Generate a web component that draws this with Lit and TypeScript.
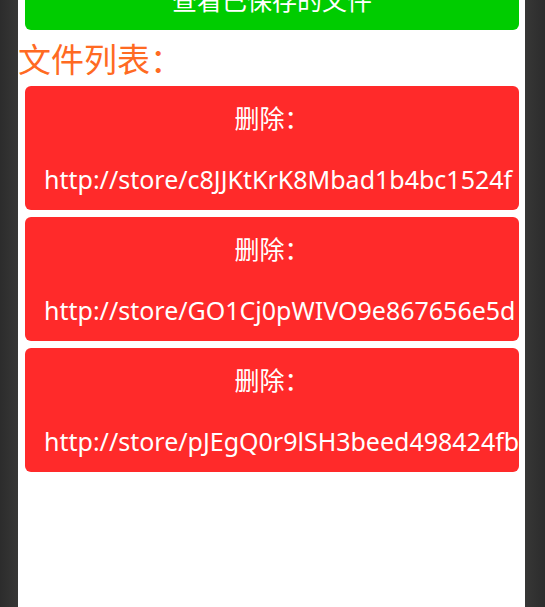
import { LitElement, html, css } from "lit";
import { customElement, state } from "lit/decorators.js";

@customElement("app-root")
export class AppRoot extends LitElement {
  static styles = css`
    :host {
      display: flex;
      height: 100vh;
      overflow: hidden;
      font-family: "Noto Sans", "Noto Sans CJK SC", sans-serif;
    }
    * {
      box-sizing: border-box;
    }
    .edge {
      flex: 0 0 18px;
      background: linear-gradient(to right, #2c2c2c, #373736);
    }
    .edge-right {
      flex-basis: 20px;
      background: linear-gradient(to left, #2c2c2c, #373736);
    }
    .phone {
      flex: 1;
      min-width: 0;
      background: #ffffff;
      overflow: hidden;
    }
    .btn {
      display: flex;
      flex-direction: column;
      align-items: center;
      width: calc(100% - 13px);
      margin: 0 6px 7px 7px;
      padding: 0 19px;
      border: 0;
      border-radius: 6px;
      color: #ffffff;
      font: inherit;
      font-size: 25px;
      line-height: 60px;
      overflow: hidden;
      white-space: nowrap;
    }
    .view {
      height: 30px;
      justify-content: flex-end;
      border-radius: 0 0 6px 6px;
      background: #00cc00;
    }
    .remove {
      padding-bottom: 2px;
      background: #ff2a2a;
    }
    .label {
      line-height: 64px;
    }
    .url {
      align-self: flex-start;
      line-height: 58px;
    }
    .title {
      margin: 0;
      padding-bottom: 4px;
      color: #ff6a22;
      font-size: 33px;
      font-weight: 400;
      line-height: 45px;
    }
  `;

  @state() private files = [
    "http://store/c8JJKtKrK8Mbad1b4bc1524f",
    "http://store/GO1Cj0pWIVO9e867656e5d",
    "http://store/pJEgQ0r9lSH3beed498424fb",
  ];

  private remove(file: string) {
    this.files = this.files.filter((f) => f !== file);
  }

  render() {
    return html`
      <div class="edge"></div>
      <main class="phone">
        <button class="btn view"><span>查看已保存的文件</span></button>
        <h1 class="title">文件列表：</h1>
        ${this.files.map(
          (file) => html`
            <button class="btn remove" @click=${() => this.remove(file)}>
              <span class="label">删除：</span>
              <span class="url">${file}</span>
            </button>
          `
        )}
      </main>
      <div class="edge edge-right"></div>
    `;
  }
}
